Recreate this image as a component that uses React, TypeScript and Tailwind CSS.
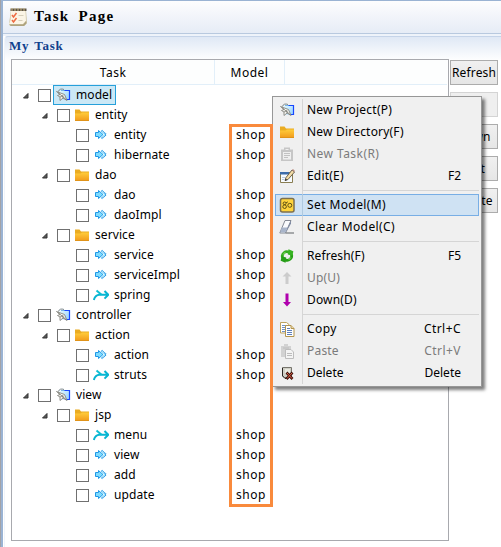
import React from "react";

type Kind = "project" | "folder" | "task" | "merge";
type Row = { label: string; level: 0 | 1 | 2; icon: Kind; selected?: boolean };

const rows: Row[] = [
  { label: "model", level: 0, icon: "project", selected: true },
  { label: "entity", level: 1, icon: "folder" },
  { label: "entity", level: 2, icon: "task" },
  { label: "hibernate", level: 2, icon: "task" },
  { label: "dao", level: 1, icon: "folder" },
  { label: "dao", level: 2, icon: "task" },
  { label: "daoImpl", level: 2, icon: "task" },
  { label: "service", level: 1, icon: "folder" },
  { label: "service", level: 2, icon: "task" },
  { label: "serviceImpl", level: 2, icon: "task" },
  { label: "spring", level: 2, icon: "merge" },
  { label: "controller", level: 0, icon: "project" },
  { label: "action", level: 1, icon: "folder" },
  { label: "action", level: 2, icon: "task" },
  { label: "struts", level: 2, icon: "merge" },
  { label: "view", level: 0, icon: "project" },
  { label: "jsp", level: 1, icon: "folder" },
  { label: "menu", level: 2, icon: "merge" },
  { label: "view", level: 2, icon: "task" },
  { label: "add", level: 2, icon: "task" },
  { label: "update", level: 2, icon: "task" },
];

const Svg = ({ children }: { children: React.ReactNode }) => (
  <svg width="16" height="16" viewBox="0 0 16 16" className="block shrink-0">
    {children}
  </svg>
);

const ProjectIcon = () => (
  <Svg>
    <defs>
      <linearGradient id="prj" x1="0" y1="0" x2="1" y2="1">
        <stop offset="0" stopColor="#e6faff" />
        <stop offset="1" stopColor="#8fd0ff" />
      </linearGradient>
    </defs>
    <path d="M4.5 3.5h10v9h-9z" fill="url(#prj)" />
    <path d="M6 3.5h4" stroke="#7ab9e8" fill="none" />
    <path d="M9.5 3.5h5v9h-4" stroke="#1746ff" strokeWidth="1.2" fill="none" />
    <path d="M3.5 4.5C4 2 6.500 1.500 9 2.500" stroke="#7b878c" fill="none" />
    <path d="M1.500 4.500L9.500 7.500L12 13.500L8 11L5 13.500L5 10L2.500 8.500L5 7.500Z" fill="#f8f8f4" stroke="#85857e" strokeWidth=".9" />
    <path d="M3 5.500L11 12.500M5 10l3-1.500M8 11V8.500" stroke="#77776f" strokeWidth=".8" />
  </Svg>
);

const FolderIcon = () => (
  <Svg>
    <defs>
      <linearGradient id="fld" x1="0" y1="0" x2="0" y2="1">
        <stop offset="0" stopColor="#ffcd3c" />
        <stop offset="1" stopColor="#f29d1d" />
      </linearGradient>
    </defs>
    <path d="M1 2.500h4.500l1.500 2H15v9H1z" fill="#eaac22" />
    <path d="M1 6.500h5.500L8 5.500H15v8H1z" fill="url(#fld)" />
    <path d="M1 13.500h14" stroke="#e09319" />
  </Svg>
);

const TaskIcon = () => (
  <Svg>
    <path d="M2.500 5.500h3v-2L10 7.500l-4.500 4v-2h-3z" fill="#7edcff" stroke="#1f97e6" />
    <path d="M8.500 3.500L13 7.500l-4.500 4" fill="none" stroke="#1f97e6" strokeWidth="1.800" strokeDasharray="1.100 .5" />
    <path d="M8.500 5L11.500 7.500l-3 2.500" fill="none" stroke="#a7edff" strokeWidth="1" />
  </Svg>
);

const MergeIcon = () => (
  <Svg>
    <path d="M.8 13C1.500 10.500 3.500 8 6.500 7.800H15M11.500 4l3.800 3.800-3.800 3.800" fill="none" stroke="#08b5d2" strokeWidth="2" />
    <path d="M3.500 3.500L8.500 7.800" fill="none" stroke="#0cbfd4" strokeWidth="2" />
  </Svg>
);

const ClipIcon = () => (
  <Svg>
    <path d="M2 3.500h12V15H2z" fill="#c6c6c6" />
    <path d="M5 1.500h6v4H5z" fill="#c6c6c6" />
    <path d="M4 6h8v7.500H4zM6.500 3h3v1h-3z" fill="#efefef" />
    <path d="M5 7.500h6M5 9.500h6M5 11.500h4" stroke="#c2c2c2" />
  </Svg>
);

const EditIcon = () => (
  <Svg>
    <path d="M1.500 4.500h12v10h-12z" fill="#f8fbff" stroke="#8a7e52" />
    <path d="M1 4h9v2.500H1z" fill="#3d6ca9" />
    <path d="M3 9.500h3M3 11.500h2" stroke="#b9cce3" />
    <path d="M6 12.500L7 9.500L13 2l2.500 2L9 11.500z" fill="#f4dda6" stroke="#5b5243" strokeWidth=".9" />
    <path d="M13 2l1-1 2 2-.8 1z" fill="#bc8a7d" />
    <path d="M6 12.700l.7-2 1.500 1.200z" fill="#222" />
  </Svg>
);

const ModelIcon = () => (
  <Svg>
    <rect x="1.500" y="1.500" width="13.500" height="13.500" rx="2" fill="#ffd43d" stroke="#7d7050" strokeWidth="1.500" />
    <ellipse cx="5.600" cy="6.300" rx="1.500" ry="1.300" fill="none" stroke="#4d430e" strokeWidth=".9" />
    <ellipse cx="5.600" cy="9.700" rx="1.800" ry="1.800" fill="none" stroke="#4d430e" strokeWidth=".9" />
    <circle cx="10.800" cy="8.300" r="2" fill="none" stroke="#4d430e" strokeWidth=".9" />
    <path d="M7 5.800l2-1" stroke="#4d430e" strokeWidth=".8" />
  </Svg>
);

const EraserIcon = () => (
  <Svg>
    <path d="M6 1.500h6L6.500 14H.8z" fill="#fafbfd" stroke="#777d88" strokeWidth=".9" />
    <path d="M2.800 8.500h6L6.500 13.500H1.200z" fill="#a9b5ca" />
    <path d="M8.800 8.500L12 1.500v3L7 13.500z" fill="#7f8ba3" />
    <path d="M6.500 14H15" fill="none" stroke="#5d6064" />
  </Svg>
);

const RefreshIcon = () => (
  <Svg>
    <path d="M3.500 9.500A4.500 4.500 0 0 1 10 4.300" fill="none" stroke="#36ac20" strokeWidth="2.800" />
    <path d="M12.500 6.500A4.500 4.500 0 0 1 6 11.700" fill="none" stroke="#23a012" strokeWidth="2.800" />
    <path d="M9.500 1.300L14.300 3.200 13.500 7.700 8.800 6.500z" fill="#37b322" />
    <path d="M6.500 14.700L1.700 12.800 2.500 8.300 7.200 9.500z" fill="#279c19" />
    <path d="M4.200 6.500l2-2.300M11.800 9.500l-2 2.300" stroke="#91e36c" />
  </Svg>
);

const UpIcon = () => (
  <Svg>
    <path d="M8 2l4.500 4.500h-3V14h-3V6.500h-3z" fill="#cccccc" />
  </Svg>
);
const DownIcon = () => (
  <Svg>
    <path d="M8 14.500l-4-4.500h2.500V1.500h3V10H12z" fill="#b000ad" />
  </Svg>
);

const CopyIcon = () => (
  <Svg>
    <path d="M1.500 1.500h6l2.500 2v8.500H1.500z" fill="#fff" stroke="#bfa35e" />
    <path d="M3 4.500h4M3 6.500h4M3 8.500h4M3 10.500h3" stroke="#6f91c7" />
    <path d="M6.500 4.500H12l3 3v8H6.500z" fill="#fff" stroke="#b3954f" />
    <path d="M12 4.500v3h3" fill="#e9d5a4" stroke="#b3954f" />
    <path d="M8 7.500h3M8 9.500h5M8 11.500h5M8 13.500h5" stroke="#5e80ba" />
  </Svg>
);

const PasteIcon = () => (
  <Svg>
    <path d="M2 3h10v11H2zM5 1h4v3H5z" fill="#d2d2d2" />
    <path d="M4 5h6" stroke="#bcbcbc" />
    <path d="M6.500 6.500H12l2.500 2.500v6.500h-8z" fill="#f4f4f4" stroke="#bdbdbd" />
    <path d="M8 10.500h5M8 12.500h5" stroke="#bcbcbc" />
  </Svg>
);

const DeleteIcon = () => (
  <Svg>
    <path d="M3.500 2.500h9v10h-7l-2-2z" fill="#cfcfc6" stroke="#77756d" />
    <path d="M3.500 3v8l2.500 2.500h2" fill="none" stroke="#292621" />
    <path d="M6 4h5v5H6z" fill="#e9e9df" />
    <path d="M7.500 7.500l6 6.500M13.500 7.500l-6 6.500" stroke="#3d120b" strokeWidth="2.600" />
    <path d="M8 8l5 5.500M13 8l-5 5.500" stroke="#e0624d" strokeWidth="1" />
  </Svg>
);

const treeIcons = { project: ProjectIcon, folder: FolderIcon, task: TaskIcon, merge: MergeIcon };
const indent = ["pl-[9px]", "pl-[28px]", "pl-[47px]"];

const TreeRow = ({ row }: { row: Row }) => {
  const Icon = treeIcons[row.icon];
  return (
    <div className="flex h-5">
      <div className={`flex w-[217px] shrink-0 items-center ${indent[row.level]}`}>
        <div className="w-[17px] shrink-0">
          {row.level < 2 && (
            <svg width="8" height="8" viewBox="0 0 8 8" className="ml-px mt-px">
              <path d="M6 1.500v4.500H1.500z" fill="#595959" stroke="#333" />
            </svg>
          )}
        </div>
        <div className="mt-px h-[13px] w-[13px] shrink-0 border border-[#707070] bg-white" />
        <div
          className={`ml-[2px] flex h-5 items-center border pl-px ${
            row.selected ? "border-[#26a0da] bg-[#cbe8f6] pr-[3px]" : "border-transparent"
          }`}
        >
          <Icon />
          <span className="ml-[5px] whitespace-nowrap leading-[18px] tracking-[0.08px]">{row.label}</span>
        </div>
      </div>
      {row.level === 2 && <div className="pl-[7px] leading-5 tracking-[0.5px]">shop</div>}
    </div>
  );
};

type Item = {
  label: string;
  icon: () => React.ReactElement;
  hint?: string;
  off?: boolean;
  hot?: boolean;
  spacing?: string;
};
const groups: Item[][] = [
  [
    { label: "New Project(P)", icon: ProjectIcon, spacing: "tracking-[0.23px]" },
    { label: "New Directory(F)", icon: FolderIcon, spacing: "tracking-[0.2px]" },
    { label: "New Task(R)", icon: ClipIcon, off: true, spacing: "tracking-[0.45px]" },
    { label: "Edit(E)", icon: EditIcon, hint: "F2", spacing: "tracking-[0.2px]" },
  ],
  [
    { label: "Set Model(M)", icon: ModelIcon, hot: true, spacing: "tracking-[0.4px]" },
    { label: "Clear Model(C)", icon: EraserIcon, spacing: "tracking-[0.4px]" },
  ],
  [
    { label: "Refresh(F)", icon: RefreshIcon, hint: "F5", spacing: "tracking-[0.1px]" },
    { label: "Up(U)", icon: UpIcon, off: true, spacing: "tracking-[0.2px]" },
    { label: "Down(D)", icon: DownIcon, spacing: "tracking-[0.15px]" },
  ],
  [
    { label: "Copy", icon: CopyIcon, hint: "Ctrl+C", spacing: "tracking-[0.4px]" },
    { label: "Paste", icon: PasteIcon, hint: "Ctrl+V", off: true, spacing: "tracking-[0.2px]" },
    { label: "Delete", icon: DeleteIcon, hint: "Delete" },
  ],
];

const ContextMenu = () => (
  <div className="absolute left-[272px] top-[96px] w-[210px] border border-[#979797] bg-[#f0f0f0] p-[2px] shadow-[3px_3px_3px_rgba(0,0,0,0.5)]">
    <div className="absolute bottom-[2px] left-[29px] top-[2px] w-px bg-[#d5d5d5]" />
    {groups.map((items, g) => (
      <div key={g}>
        {g > 0 && (
          <div className="flex h-[7px] items-center pl-[28px]">
            <div className="h-px w-full bg-[#d5d5d5]" />
          </div>
        )}
        {items.map((it) => (
          <div
            key={it.label}
            className={`relative flex h-[22px] items-center border pl-[3px] pr-[17px] ${
              it.hot ? "border-[#78aee5] bg-[#cfe2f3]" : "border-transparent"
            } ${it.off ? "text-[#7b7b7b]" : ""}`}
          >
            {it.hot && <div className="absolute -bottom-px -top-px left-[26px] w-px bg-[#afc9df]" />}
            <it.icon />
            <span className={`ml-[12px] grow whitespace-nowrap ${it.spacing ?? ""}`}>{it.label}</span>
            <span className={it.hint?.startsWith("Ctrl") ? "tracking-[0.45px]" : ""}>{it.hint}</span>
          </div>
        ))}
      </div>
    ))}
  </div>
);

const TitleIcon = () => (
  <svg width="19" height="20" viewBox="0 0 19 20" className="block">
    <path d="M2 3h15l1 13-3 3H1L0 17z" fill="#cdc3a2" />
    <path d="M2 4h14.500l.5 10-3 3H0l1.500-4z" fill="#fbf5e6" />
    <path d="M.5 17.500h13.500l3-3.500.5 2.500-2.500 2.500H2z" fill="#aea37e" />
    <path d="M1.500 1.500h16v2.500h-16z" fill="#5b5347" />
    <path d="M3 1v3M6 1v3M9 1v3M12 1v3M15 1v3" stroke="#cbb987" />
    <path d="M3 8l1.500 2L7.500 6M3 13l1.500 2L7.500 11" fill="none" stroke="#ee6a42" strokeWidth="1.500" />
    <path d="M9.500 8.500h5M9.500 13.500h4" stroke="#d6cfbb" />
  </svg>
);

const buttons = ["Refresh", "Up", "Down", "Edit", "Delete"];

export default function App() {
  return (
    <div className="relative flex h-[547px] w-[501px] overflow-hidden bg-white font-['Noto_Sans','Noto_Sans_CJK_SC',sans-serif] text-[12px] leading-[20px] text-black">
      <div className="w-[3px] shrink-0 border-l border-[#a3a3a8] bg-[#9ab3d3]" />
      <div className="flex grow flex-col">
        <header className="flex h-[34px] shrink-0 items-center border-b border-t border-b-[#b8c9df] border-t-[#9ab3d3] bg-linear-to-b from-[#fdfdfe] to-[#e6ecf6] pl-[6px]">
          <TitleIcon />
          <h1 className="ml-[6px] mt-[-2px] font-['Liberation_Serif',serif] text-[15px] font-bold tracking-[1.300px] [word-spacing:4px]">
            Task Page
          </h1>
        </header>
        <div className="h-[2px] shrink-0 bg-[#eef3fa]" />
        <section className="ml-px flex grow flex-col rounded-tl-[4px] border-l border-t border-[#c5d4e9] border-l-[#f0f4fa] bg-linear-to-b from-[#dfe8f5] to-white to-[24px]">
          <h2 className="h-[22px] pl-[4px] font-['Liberation_Serif',serif] text-[13px] font-bold leading-[17px] tracking-[0.8px] text-[#10408c] [word-spacing:1px]">
            My Task
          </h2>
          <div className="flex pl-[6px]">
            <div className="h-[482px] w-[438px] shrink-0 border border-[#a8a9ae] bg-white">
              <div className="mr-px flex h-[25px] border-b border-[#e2eff9] bg-[#fdfefe] text-center leading-[26px] tracking-[0.5px]">
                <div className="w-[203px] border-r border-[#e2eff9]">Task</div>
                <div className="w-[70px] border-r border-[#e2eff9]">Model</div>
              </div>
              {rows.map((r, i) => (
                <TreeRow key={i} row={r} />
              ))}
            </div>
            <div className="ml-px flex w-[48px] flex-col gap-[7px] pt-px">
              {buttons.map((b) => (
                <button
                  key={b}
                  disabled={b === "Up"}
                  className={`h-[25px] whitespace-nowrap border bg-linear-to-b tracking-[0.15px] ${
                    b === "Up"
                      ? "border-[#d4d4d4] from-[#efefef] to-[#efefef] text-gray-400"
                      : "border-[#acacac] from-[#f0f0f0] to-[#e6e6e6]"
                  }`}
                >
                  {b}
                </button>
              ))}
            </div>
          </div>
        </section>
      </div>
      <ContextMenu />
      <div className="absolute left-[229px] top-[124px] h-[383px] w-[44px] border-[3px] border-[#f98a3c]" />
    </div>
  );
}
